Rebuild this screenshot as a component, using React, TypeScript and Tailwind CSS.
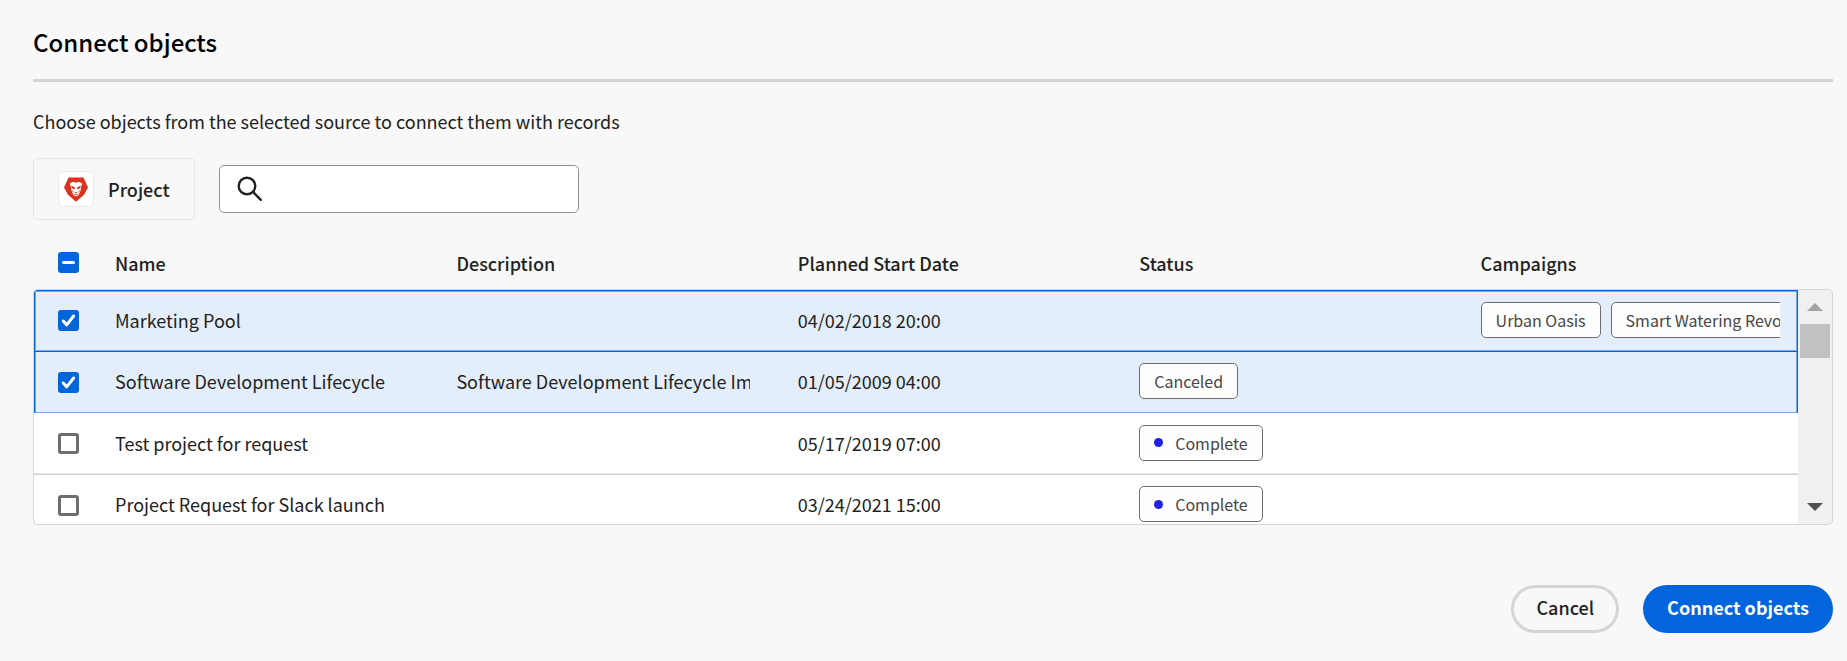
import { useState } from "react";

type Status = { label: string; dot?: boolean };
type Project = {
  name: string;
  description?: string;
  date: string;
  status?: Status;
  campaigns?: string[];
};

const projects: Project[] = [
  { name: "Marketing Pool", date: "04/02/2018 20:00", campaigns: ["Urban Oasis", "Smart Watering Revolution"] },
  {
    name: "Software Development Lifecycle",
    description: "Software Development Lifecycle Implementation",
    date: "01/05/2009 04:00",
    status: { label: "Canceled" },
  },
  { name: "Test project for request", date: "05/17/2019 07:00", status: { label: "Complete", dot: true } },
  { name: "Project Request for Slack launch", date: "03/24/2021 15:00", status: { label: "Complete", dot: true } },
];

const columns = ["Name", "Description", "Planned Start Date", "Status", "Campaigns"];
const rowGrid = "grid grid-cols-[57px_repeat(5,minmax(0,1fr))] items-center";
const cell = "flex min-w-0 items-center overflow-hidden whitespace-nowrap leading-8";

function Checkbox({
  label,
  checked,
  mixed,
  onChange,
}: {
  label: string;
  checked: boolean;
  mixed?: boolean;
  onChange: () => void;
}) {
  return (
    <span className="grid size-[21px]">
      <input
        type="checkbox"
        aria-label={label}
        checked={checked}
        onChange={onChange}
        className="col-start-1 row-start-1 size-[21px] appearance-none rounded-[3px] border-3 border-[#6e6e6e] bg-white checked:border-[#0265dc] checked:bg-[#0265dc]"
      />
      {checked && (
        <svg viewBox="0 0 21 21" className="pointer-events-none col-start-1 row-start-1 size-[21px]" fill="none" stroke="#fff" strokeWidth="3" strokeLinecap="round">
          {mixed ? <path d="M5.5 10.5h10" /> : <path d="M5.3 11l3.4 3.9L15.6 6" strokeLinejoin="round" />}
        </svg>
      )}
    </span>
  );
}

function Tag({ label, dot }: Status) {
  return (
    <span className="inline-flex h-9 shrink-0 items-center gap-3 rounded-[5px] border border-[#6e6e6e] bg-[#fdfdfd] px-3.5 text-base text-[#464646]">
      {dot && <span className="size-[9px] rounded-full bg-[#2020e6]" />}
      {label}
    </span>
  );
}

function LionLogo() {
  return (
    <svg viewBox="0 0 24 25" className="h-[25px] w-6" aria-hidden="true">
      <path d="M4.500.600h15L24 10.500 20 17.800 12 24.700 4 17.800 0 10.500z" fill="#dc3220" />
      <path d="M5.800 6.800c1-.4 1.500-1.800 3-1.800 1.300 0 2 .7 3.200.7s1.900-.7 3.200-.7c1.500 0 2 1.400 3 1.800-.2 1.500-1 2-1.300 3.200-.3 1.500.1 3-.7 4.500l-1.700 3.700L12 19.500l-2.500-1.300-1.700-3.700c-.8-1.500-.4-3-.7-4.500-.3-1.200-1.100-1.700-1.300-3.200z" fill="#fff" />
      <path d="M7.200 8.500l3.600 1.700v2.300l-2.500-1zM16.800 8.500l-3.600 1.700v2.300l2.500-1zM10.300 15.300h3.400L12 16.700zM8 12.800l1.500 1.500-.2 2zM16 12.800l-1.500 1.500.2 2z" fill="#dc3220" />
      <path d="M10 17.700h4" stroke="#dc3220" strokeWidth=".8" />
    </svg>
  );
}

export default function App() {
  const [selected, setSelected] = useState([true, true, false, false]);
  const count = selected.filter(Boolean).length;
  const all = count === selected.length;

  return (
    <main className="min-h-screen bg-[#f8f8f8] pt-[25px] pr-3.5 pb-7 pl-[33px] font-['Noto_Sans_CJK_SC',sans-serif] text-lg leading-6 text-[#222222]">
      <h1 className="border-b-3 border-[#d5d5d5] pb-5 text-2xl leading-[34px] font-medium text-black">Connect objects</h1>
      <p className="mt-[27px]">Choose objects from the selected source to connect them with records</p>

      <div className="mt-[25px] flex items-center gap-6">
        <button type="button" className="flex h-[62px] items-center gap-3.5 rounded-[5px] border border-[#e6e6e6] px-6 font-medium">
          <span className="flex size-9 items-center justify-center rounded-[5px] border border-[#e9e9e9] bg-white">
            <LionLogo />
          </span>
          Project
        </button>
        <label className="flex h-12 w-[360px] items-center gap-3 rounded-[5px] border border-[#909090] bg-white px-[17px]">
          <svg viewBox="0 0 26 26" className="size-[26px] shrink-0" fill="none" stroke="#222222" strokeWidth="2.400" strokeLinecap="round" aria-hidden="true">
            <circle cx="10" cy="10" r="8.300" />
            <path d="M16 16l7.800 7.800" />
          </svg>
          <input type="search" aria-label="Search objects" className="min-w-0 flex-1 bg-transparent outline-none" />
        </label>
      </div>

      <div className="mt-5 flex items-end">
        <table className="block min-w-0 flex-1">
          <thead className="block pl-px">
            <tr className={`h-12 ${rowGrid} mb-px`}>
              <th className="pb-1 pl-6">
                <Checkbox label="Select all" checked={count > 0} mixed={!all} onChange={() => setSelected(selected.map(() => !all))} />
              </th>
              {columns.map((c) => (
                <th key={c} className="pr-6 pb-0.5 pl-6 text-left font-medium">
                  {c}
                </th>
              ))}
            </tr>
          </thead>
          <tbody className="block h-[236px] overflow-hidden rounded-l-[5px] border border-r-0 border-[#d5d5d5] bg-white">
            {projects.map((p, i) => (
              <tr
                key={p.name}
                className={`h-[61px] even:h-[62px] ${rowGrid} ${
                  selected[i]
                    ? "bg-[#e4eefb] shadow-[inset_0_1px_#0265dc,inset_1px_0_#0265dc,inset_-1px_0_#0265dc,inset_0_-1px_#76a9ec,inset_2px_0_#76a9ec,inset_-2px_0_#76a9ec] first:shadow-[inset_0_1px_#0265dc,inset_1px_0_#0265dc,inset_-1px_0_#0265dc,inset_0_-1px_#76a9ec,inset_2px_0_#76a9ec,inset_-2px_0_#76a9ec,inset_0_2px_#76a9ec]"
                    : "not-last:shadow-[inset_0_-1px_#e6e6e6] last:shadow-[inset_0_1px_#d0d0d0]"
                }`}
              >
                <td className="pl-6">
                  <Checkbox
                    label={`Select ${p.name}`}
                    checked={selected[i]}
                    onChange={() => setSelected(selected.map((s, j) => (j === i ? !s : s)))}
                  />
                </td>
                <td className="min-w-0 pr-6 pb-0.5 pl-6">
                  <div className={cell}>{p.name}</div>
                </td>
                <td className="min-w-0 pr-6 pb-0.5 pl-6">
                  <div className={cell}>{p.description}</div>
                </td>
                <td className="min-w-0 pr-6 pb-0.5 pl-6">
                  <div className={cell}>{p.date}</div>
                </td>
                <td className="min-w-0 pr-6 pb-0.5 pl-6">
                  <div className={cell}>{p.status && <Tag {...p.status} />}</div>
                </td>
                <td className="min-w-0 pr-[18px] pb-0.5 pl-6">
                  <div className={`gap-2.5 ${cell}`}>
                    {p.campaigns?.map((c) => <Tag key={c} label={c} />)}
                  </div>
                </td>
              </tr>
            ))}
          </tbody>
        </table>
        <div className="flex h-[236px] w-[35px] flex-col items-center rounded-r-[5px] border border-l-0 border-[#d5d5d5] bg-[#f0f0f0]">
          <button type="button" aria-label="Scroll up" className="flex h-[34px] w-full items-center justify-center">
            <svg viewBox="0 0 16 8" className="h-2 w-4" fill="#a3a3a3"><path d="M0 8 8 0l8 8z" /></svg>
          </button>
          <div className="h-[34px] w-[30px] bg-[#c1c1c1]" />
          <button type="button" aria-label="Scroll down" className="mt-auto flex h-[34px] w-full items-center justify-center">
            <svg viewBox="0 0 16 8" className="h-2 w-4" fill="#505050"><path d="M0 0h16L8 8z" /></svg>
          </button>
        </div>
      </div>

      <div className="mt-[60px] flex justify-end gap-6">
        <button type="button" className="h-12 rounded-full border-3 border-[#d5d5d5] px-[22px] pb-1 font-medium">
          Cancel
        </button>
        <button type="button" className="h-12 rounded-full bg-[#0265dc] px-6 pb-1 font-bold text-white">
          Connect objects
        </button>
      </div>
    </main>
  );
}
